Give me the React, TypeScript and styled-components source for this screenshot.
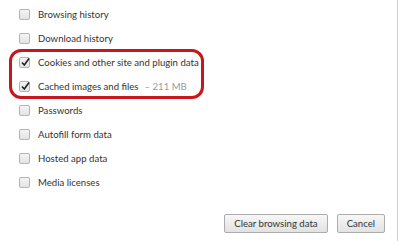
import React from "react";
import styled, { createGlobalStyle } from "styled-components";

const GlobalStyle = createGlobalStyle`
  html, body {
    margin: 0;
    padding: 0;
    background: #ffffff;
  }
  body {
    font-family: "Lato", "Noto Sans", sans-serif;
  }
`;

const Dialog = styled.div`
  width: 397px;
  height: 241px;
  border-right: 1px solid #cfcfcf;
  display: flex;
  flex-direction: column;
  background: #ffffff;
`;

const List = styled.div`
  position: relative;
  display: flex;
  flex-direction: column;
  padding: 2px 0 0 19px;
`;

const Row = styled.label`
  display: flex;
  align-items: center;
  height: 24px;
  gap: 8px;
  font-size: 9.6px;
  color: #333333;
  white-space: nowrap;
`;

const Box = styled.span<{ $checked?: boolean }>`
  position: relative;
  box-sizing: border-box;
  width: 11px;
  height: 11px;
  border: 1px solid #b4b4b4;
  border-radius: 2px;
  background: linear-gradient(#f4f4f4, #e4e4e4);
  flex: none;
`;

const Size = styled.span`
  color: #9a9a9a;
  margin-left: 6px;
`;

const Highlight = styled.div`
  position: absolute;
  left: 9px;
  top: 49px;
  width: 195px;
  height: 50px;
  box-sizing: border-box;
  border: 3px solid #c8161e;
  border-radius: 12px;
  pointer-events: none;
`;

const Footer = styled.div`
  display: flex;
  justify-content: flex-end;
  gap: 9px;
  margin-top: auto;
  padding: 0 12px 8px 0;
`;

const Button = styled.button`
  box-sizing: border-box;
  height: 19px;
  padding: 0 9px;
  border: 1px solid #acacac;
  border-radius: 2px;
  background: linear-gradient(#f7f7f7, #e2e2e2);
  font-family: "Lato", "Noto Sans", sans-serif;
  font-size: 9.6px;
  color: #333333;
  line-height: 17px;
`;

const Check = () => (
  <svg
    width="11"
    height="11"
    viewBox="0 0 11 11"
    style={{ position: "absolute", left: 0, top: -1 }}
  >
    <path d="M2 5.5 L4.3 8 L9 1.5" fill="none" stroke="#222" strokeWidth="1.6" />
  </svg>
);

const items: { label: string; checked?: boolean; size?: string }[] = [
  { label: "Browsing history" },
  { label: "Download history" },
  { label: "Cookies and other site and plugin data", checked: true },
  { label: "Cached images and files", checked: true, size: "\u2013 211 MB" },
  { label: "Passwords" },
  { label: "Autofill form data" },
  { label: "Hosted app data" },
  { label: "Media licenses" },
];

export default function App() {
  return (
    <>
      <GlobalStyle />
      <Dialog>
        <List>
          {items.map((item) => (
            <Row key={item.label}>
              <Box $checked={item.checked}>{item.checked && <Check />}</Box>
              <span>
                {item.label}
                {item.size && <Size>{item.size}</Size>}
              </span>
            </Row>
          ))}
          <Highlight />
        </List>
        <Footer>
          <Button>Clear browsing data</Button>
          <Button>Cancel</Button>
        </Footer>
      </Dialog>
    </>
  );
}
